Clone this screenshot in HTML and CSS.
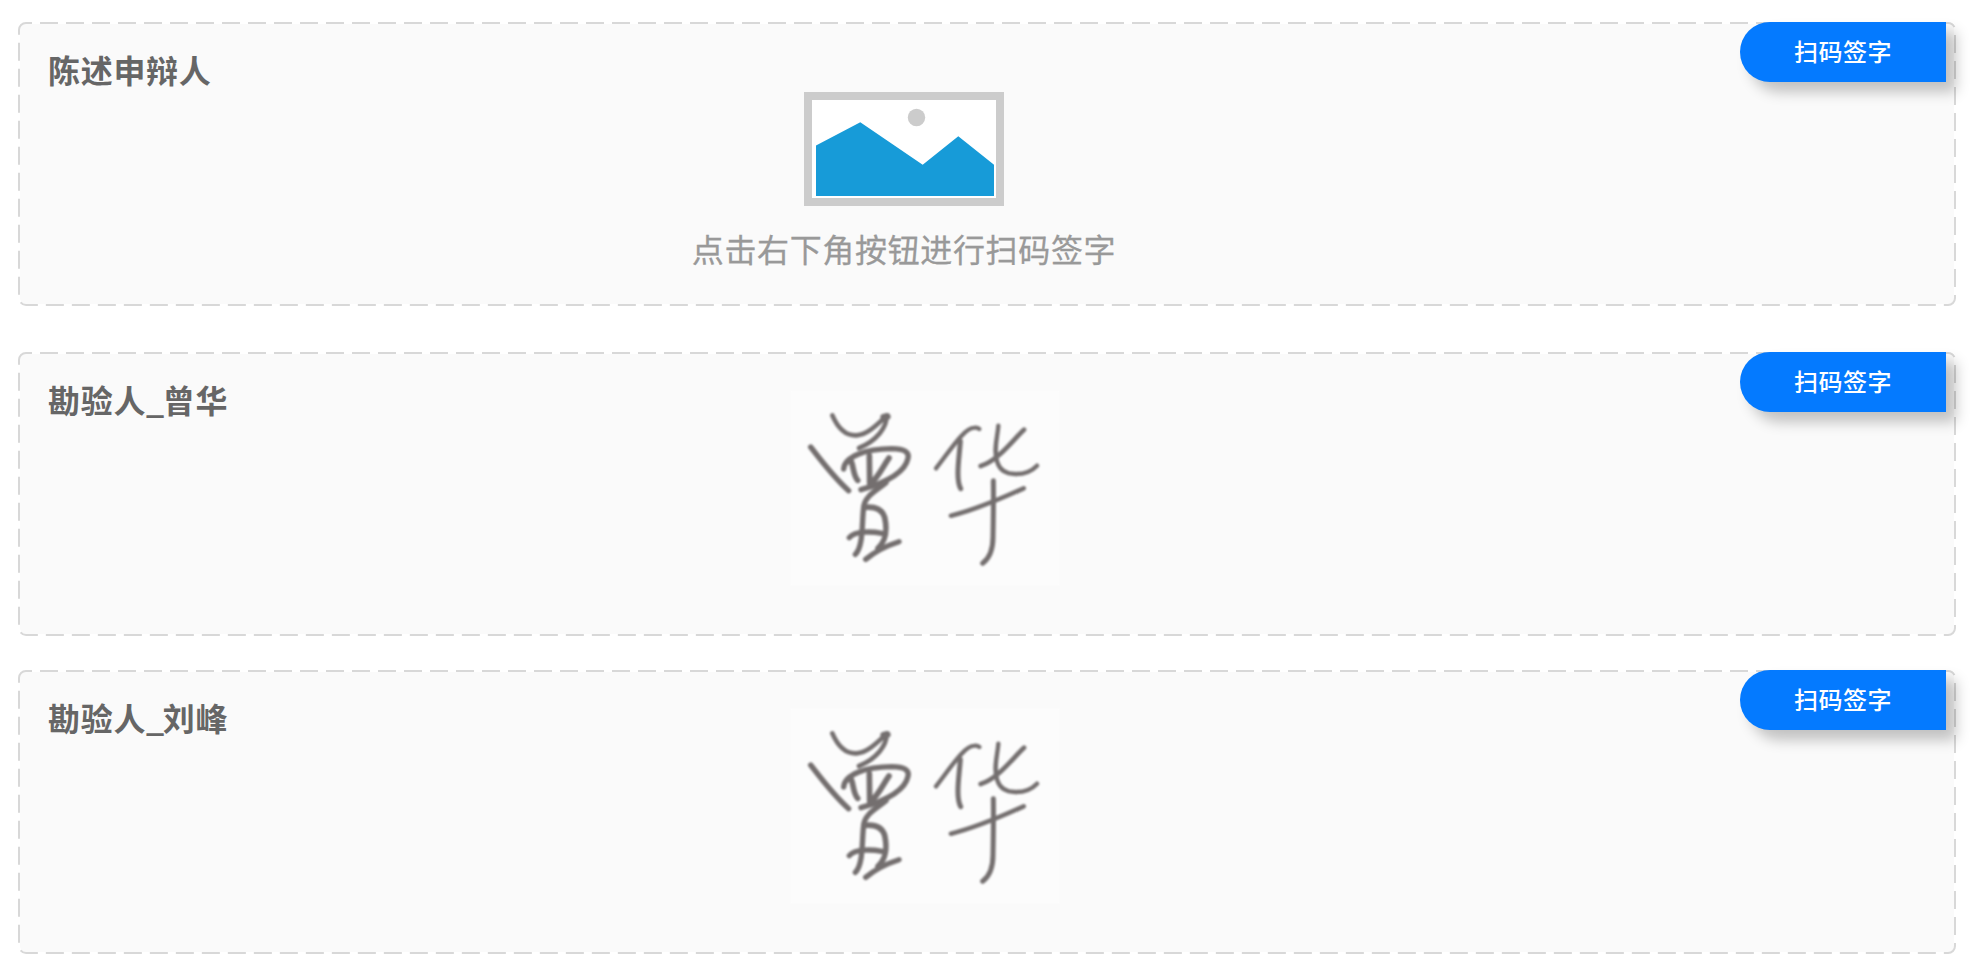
FILE: index.html
```html
<!DOCTYPE html>
<html lang="zh-CN">
<head>
<meta charset="utf-8">
<title>扫码签字</title>
<link rel="stylesheet" href="styles.css">
</head>
<body>
<svg class="defs" aria-hidden="true">
  <symbol id="outline" viewBox="0 0 1938 284">
    <rect x="1" y="1" width="1936" height="282" rx="7" fill="none" stroke="#d8d8d8" stroke-width="2" stroke-dasharray="18 8" stroke-dashoffset="12"/>
  </symbol>
  <symbol id="signature" viewBox="30 30 810 588">
    <g fill="none" stroke="#746f6f" stroke-linecap="round" stroke-linejoin="round" stroke-width="16">
      <path d="M157 106C174 145 198 168 230 166C262 164 291 134 320 107C321 142 290 182 237 204" stroke-width="14"/>
      <path d="M311 112L322 109" stroke-width="20"/>
      <path d="M92 201C124 242 160 291 206 332"/>
      <path d="M191 267C194 229 256 207 335 206C374 207 389 216 384 235C377 268 338 302 243 329"/>
      <path d="M214 245C221 262 220 287 233 301M268 227L269 310M327 234C309 259 298 287 271 313" stroke-width="17"/>
      <path d="M318 308C292 330 254 347 251 382C245 426 251 499 226 523"/>
      <path d="M252 382C286 378 307 389 314 412C321 445 322 478 294 505" stroke-width="17"/>
      <path d="M208 473C225 452 275 454 306 460" stroke-width="16"/>
      <path d="M257 538C288 512 313 499 357 485" stroke-width="16"/>
      <path d="M468 265C512 209 552 144 583 143Q593 142 598 147" stroke-width="13"/>
      <path d="M541 184C538 232 526 295 542 326" stroke-width="15"/>
      <path d="M655 137C653 170 639 211 652 247C667 294 739 290 771 257" stroke-width="13"/>
      <path d="M732 149C701 177 655 242 602 258" stroke-width="14"/>
      <path d="M513 407C591 388 663 356 731 325" stroke-width="14"/>
      <path d="M640 302C641 359 640 416 639 471C639 508 628 535 608 550" stroke-width="15"/>
    </g>
  </symbol>
</svg>
<main class="page">
  <section class="card">
    <svg class="card-outline"><use href="#outline"/></svg>
    <h2 class="card-title">陈述申辩人</h2>
    <div class="card-content placeholder">
      <svg class="placeholder-icon" viewBox="0 0 200 114">
        <rect x="4" y="4" width="192" height="106" fill="#fff" stroke="#ccc" stroke-width="8"/>
        <circle cx="112.5" cy="25.5" r="8.7" fill="#ccc"/>
        <path d="M12 53.5L56.3 30.3 118.7 72.7 154.3 44.3 190 72.7V104H12Z" fill="#179bd8"/>
      </svg>
      <p class="placeholder-text">点击右下角按钮进行扫码签字</p>
    </div>
    <button class="scan-button" type="button">扫码签字</button>
  </section>
  <section class="card second">
    <svg class="card-outline"><use href="#outline"/></svg>
    <h2 class="card-title">勘验人<span class="separator">_</span>曾华</h2>
    <div class="card-content">
      <svg class="signature"><use href="#signature"/></svg>
    </div>
    <button class="scan-button" type="button">扫码签字</button>
  </section>
  <section class="card third">
    <svg class="card-outline"><use href="#outline"/></svg>
    <h2 class="card-title">勘验人<span class="separator">_</span>刘峰</h2>
    <div class="card-content">
      <svg class="signature"><use href="#signature"/></svg>
    </div>
    <button class="scan-button" type="button">扫码签字</button>
  </section>
</main>
</body>
</html>
```
FILE: styles.css
```css
* {
  box-sizing: border-box;
}

body {
  margin: 0;
  background: #fff;
  font-family: "Noto Sans CJK SC", sans-serif;
}

.defs {
  display: none;
}

.page {
  padding: 22px 18px 12px;
}

.card {
  position: relative;
  display: grid;
  grid-template-columns: 530px 708px 1fr;
  align-items: start;
  height: 284px;
  border: 2px solid transparent;
  border-radius: 8px;
  background: #fafafa padding-box;
}

.second {
  margin-top: 46px;
}

.third {
  margin-top: 34px;
}

.card-outline {
  position: absolute;
  top: -2px;
  left: -2px;
  width: 1938px;
  height: 284px;
}

.card-title {
  margin: 21px 0 0 28px;
  color: #666;
  font-size: 32px;
  font-weight: 700;
  line-height: 48px;
  letter-spacing: 0.7px;
}

.separator {
  letter-spacing: -1.5px;
}

.card-content {
  display: flex;
  flex-direction: column;
  align-items: center;
}

.placeholder {
  padding-top: 68px;
}

.placeholder-icon {
  width: 200px;
  height: 114px;
}

.placeholder-text {
  margin: 18px 0 0;
  color: #999;
  font-size: 32px;
  line-height: 48px;
  letter-spacing: 0.65px;
  -webkit-text-stroke: 0.3px #999;
}

.signature {
  width: 270px;
  height: 196px;
  margin: 36px 0 0 42px;
  background: #fcfcfc;
  filter: blur(1px);
}

.scan-button {
  justify-self: end;
  width: 206px;
  height: 60px;
  margin: -2px 8px 0 0;
  padding: 0 0 2px;
  border: 0;
  border-radius: 30px 0 0 30px;
  background: #047aff;
  box-shadow: 10px 10px 14px rgba(0, 0, 0, 0.23);
  color: #fff;
  font-family: inherit;
  font-size: 24px;
  font-weight: 500;
  line-height: 58px;
  letter-spacing: 0.5px;
  z-index: 1;
}
```
